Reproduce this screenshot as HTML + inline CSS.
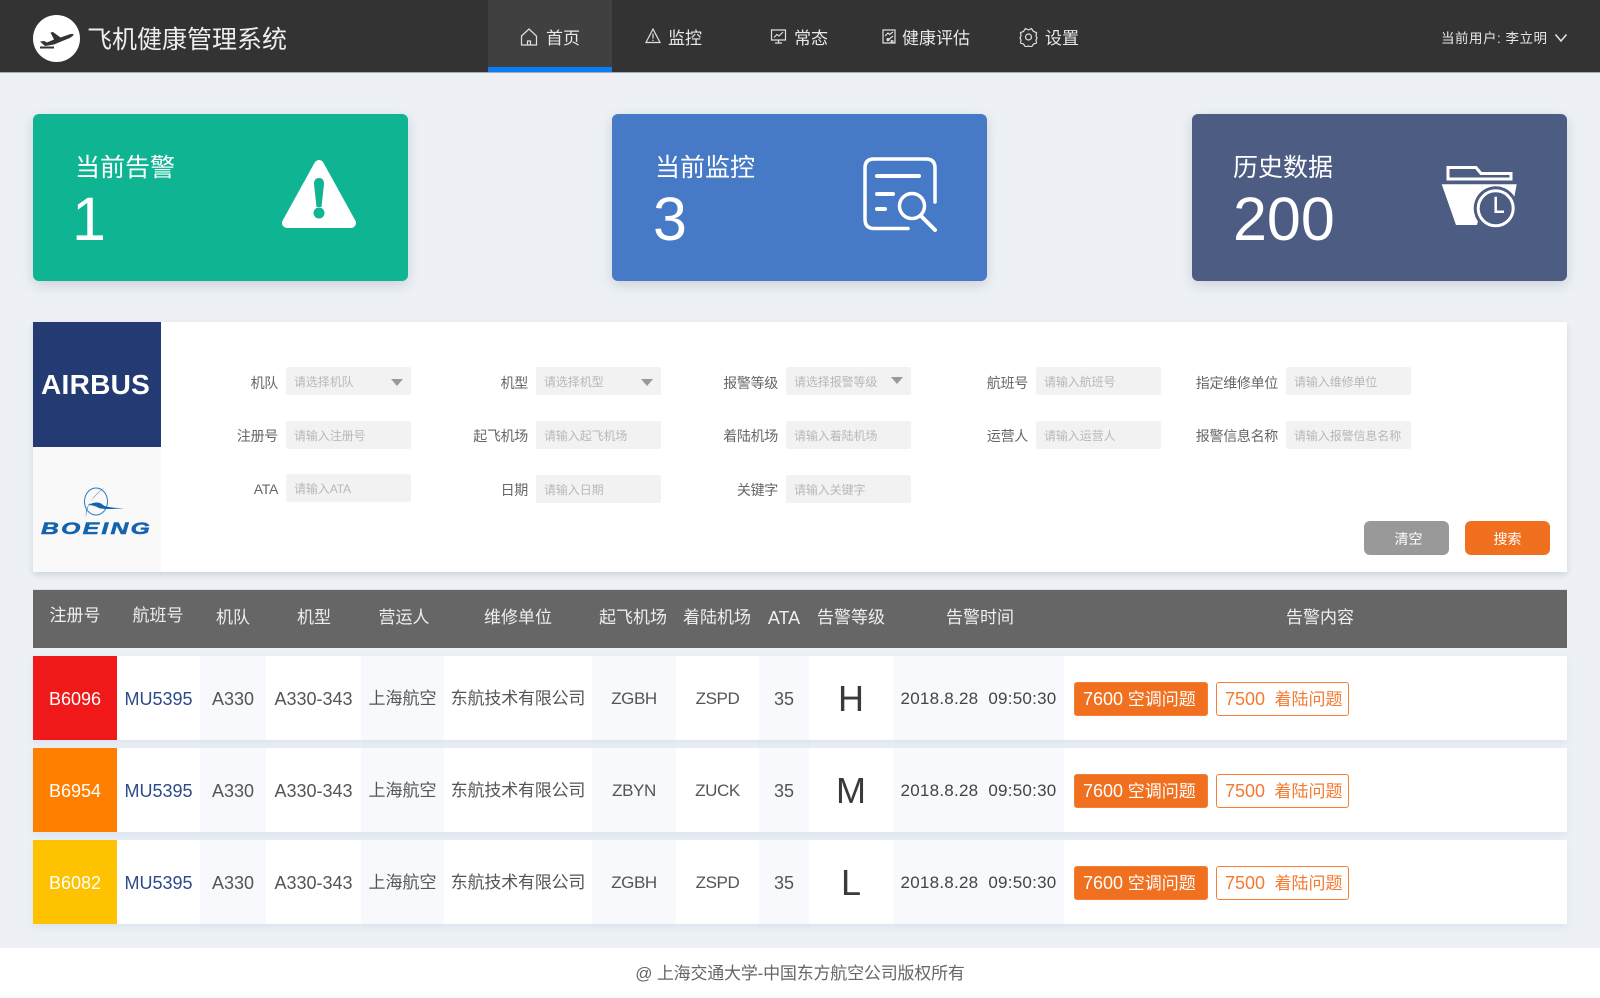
<!DOCTYPE html>
<html lang="zh-CN">
<head>
<meta charset="utf-8">
<title>飞机健康管理系统</title>
<style>
*{box-sizing:border-box;margin:0;padding:0}
html,body{width:1600px;height:998px;overflow:hidden}
body{position:relative;background:#edf1f5;font-family:"Liberation Sans","Noto Sans CJK SC",sans-serif;color:#444}
.a{position:absolute;white-space:nowrap}
#nav{left:0;top:0;width:1600px;height:73px;background:#333;border-bottom:1px solid #aaa}
#active{left:488px;top:0;width:124px;height:72px;background:#404040;border-bottom:5px solid #0a7cf5}
.nt{top:26px;height:26px;line-height:26px;font-size:17px;color:#e8e8e8}
.ni{top:27px;fill:none;stroke:#e0e0e0;stroke-width:1.2}
.card{top:114px;width:375px;height:167px;border-radius:6px;box-shadow:0 4px 12px rgba(90,100,120,.22);color:#fff}
.ct{top:36px;height:36px;line-height:36px;font-size:25px}
.cn{top:70px;height:70px;line-height:70px;font-size:61px}
#panel{left:33px;top:322px;width:1534px;height:250px;background:#fff;box-shadow:0 3px 6px rgba(90,100,120,.2)}
.lb{width:120px;text-align:right;font-size:14px;color:#666;height:20px;line-height:20px;letter-spacing:-.3px}
.in{width:125px;height:28px;background:#f2f2f2;border-radius:2px;font-size:12px;color:#b8b8b8;line-height:30px;padding-left:8px;letter-spacing:-.1px}
.tri{position:absolute;right:8px;top:12px;width:0;height:0;border-left:6.5px solid transparent;border-right:6.5px solid transparent;border-top:7px solid #999}
.btn{top:521px;width:85px;height:34px;border-radius:6px;color:#fff;font-size:14px;line-height:37px;text-align:center}
#thead{left:33px;top:589px;width:1534px;height:59px;background:#666;border-top:1px solid #ddd}
.th{top:606px;height:24px;line-height:24px;font-size:17px;color:#eee;text-align:center;transform:translateX(-50%)}
.row{left:33px;width:1534px;height:84px;display:flex;background:#fff;box-shadow:0 3px 7px rgba(95,140,190,.13)}
.row>div{height:100%;text-align:center;line-height:86px;font-size:17px;color:#555;white-space:nowrap;overflow:visible}
.row>.l{background:#f7f9fc}
.row>.n{font-size:18px}
.row>.z{letter-spacing:-.4px}
.row>.reg{color:#fff;font-size:18px}
.row>.fl{color:#2c4a8c;font-size:18px}
.row>.lv{font-size:36px;color:#3a3a3a}
.row>.tm{color:#444;letter-spacing:.25px}
.row>.cn2{letter-spacing:-.2px}
.row>.tag{top:26px;height:34px;border-radius:3px;line-height:33px;font-size:17px;text-align:left;padding-left:8px;border:1px solid #f47f35}
.tag b{font-weight:400;font-size:18px}
.row>.t1{left:1041px;width:134px;background:#f07020;color:#fff}
.row>.t2{left:1183px;width:133px;background:#fff;color:#f47a30}
#foot{left:0;top:948px;width:1600px;height:50px;background:#fff;text-align:center;line-height:52px;font-size:17px;letter-spacing:-.2px;color:#666}
</style>
</head>
<body>
<div class="a" id="nav"></div>
<div class="a" id="active"></div>

<svg class="a" style="left:33px;top:15px" width="48" height="48" viewBox="0 0 48 48">
<circle cx="23.500" cy="23.500" r="23.500" fill="#fff"/>
<path d="M7 26.500 L11 26 L14 27.500 L21 24.500 L17.500 17.500 L20 17 L27.500 22.500 L36 19.500 Q41 18 40.500 20 Q38 23 33 24.500 L21 29.500 L12 31 Z" fill="#333"/>
<path d="M7 31.500H21V33.500H7Z" fill="#333"/>
</svg>
<div class="a" style="left:87px;top:21px;height:38px;line-height:38px;font-size:25px;color:#eee">飞机健康管理系统</div>

<svg class="a ni" style="left:520px" width="18" height="20" viewBox="0 0 18 20"><path d="M1.500 9 9 2l7.500 7v9h-15zM7.500 18v-4h3v4"/></svg>
<div class="a nt" style="left:546px">首页</div>
<svg class="a ni" style="left:645px" width="16" height="18" viewBox="0 0 16 18"><path d="M8 2 15 15.500H1zM8 6.500v5M8 12.800v1.200"/></svg>
<div class="a nt" style="left:668px">监控</div>
<svg class="a ni" style="left:770px" width="17" height="18" viewBox="0 0 17 18"><path d="M1.500 3h14v10h-14zM5 16h7M8.500 13v3M4 10.500l3-3 2 1.500 4-4"/></svg>
<div class="a nt" style="left:794px">常态</div>
<svg class="a ni" style="left:881px" width="16" height="18" viewBox="0 0 16 18"><path d="M2 3h12v13H2zM4 9l3-3 1.500 1.500L12 5M6 14l6-5M7 11.500a1 1 0 1 0 .1 0M11 13.500a1 1 0 1 0 .1 0"/></svg>
<div class="a nt" style="left:902px">健康评估</div>
<svg class="a ni" style="left:1019px" width="19" height="20" viewBox="0 0 19 20"><path d="M6.500 1.500 9.500 3l3-1.500 2 3 3 1-.5 3.500 1 2-1 2 .5 3-3 1-2 3-3-1-3 1-2-3-3-1 .5-3-1-2 1-2-.5-3.500 3-1z"/><circle cx="9.500" cy="10" r="3"/></svg>
<div class="a nt" style="left:1045px">设置</div>
<div class="a" style="left:1441px;top:27px;height:24px;line-height:24px;font-size:13.500px;letter-spacing:.5px;color:#e8e8e8">当前用户: 李立明</div>
<svg class="a" style="left:1554px;top:32px" width="14" height="12" viewBox="0 0 14 12"><path d="M1.500 2.500 7 9l5.500-6.500" fill="none" stroke="#e8e8e8" stroke-width="1.500"/></svg>

<div class="a card" style="left:33px;background:#0fb493">
<div class="a ct" style="left:42px">当前告警</div>
<div class="a cn" style="left:39px">1</div>
<svg class="a" style="left:248px;top:46px" width="76" height="68" viewBox="0 0 76 68">
<path d="M38 5 70 63H6Z" fill="#fff" stroke="#fff" stroke-width="10" stroke-linejoin="round"/>
<path d="M33 24Q33 18 38 18Q43 18 43 24L40.500 47H35.500Z" fill="#0fb493"/>
<circle cx="38" cy="53" r="5.500" fill="#0fb493"/>
</svg>
</div>

<div class="a card" style="left:612px;background:#4679c6">
<div class="a ct" style="left:43px">当前监控</div>
<div class="a cn" style="left:41px">3</div>
<svg class="a" style="left:250px;top:42px" width="76" height="76" viewBox="0 0 76 76" fill="none" stroke="#fff" stroke-width="3.500" stroke-linecap="round">
<path d="M46 72.500H12Q3 72.500 3 63V12Q3 3 12 3H64Q73 3 73 12V46"/>
<path d="M15 20H57M15 38H31M15 53H23" stroke-width="4"/>
<circle cx="50" cy="50" r="12.500"/>
<path d="M59 60 73 74" stroke-width="4"/>
</svg>
</div>

<div class="a card" style="left:1192px;background:#4c5c82">
<div class="a ct" style="left:41px">历史数据</div>
<div class="a cn" style="left:41px">200</div>
<svg class="a" style="left:249px;top:50px" width="80" height="70" viewBox="0 0 80 70">
<path d="M7 3.500H35L40 9.500H70V15H7Z" fill="none" stroke="#fff" stroke-width="3"/>
<path d="M.7 20.300H75.700L71 45H40L36 61H15Z" fill="#fff"/>
<circle cx="54.700" cy="44.300" r="22" fill="#4c5c82"/>
<circle cx="54.700" cy="44.300" r="17.500" fill="none" stroke="#fff" stroke-width="3"/>
<path d="M54.700 32.700V47.700H63" fill="none" stroke="#fff" stroke-width="2.500"/>
</svg>
</div>

<div class="a" id="panel"></div>
<div class="a" style="left:33px;top:322px;width:128px;height:125px;background:#243a73"></div>
<div class="a" style="left:33px;top:447px;width:128px;height:125px;background:#f9f9f9"></div>
<div class="a" style="left:41px;top:366px;height:38px;line-height:38px;font-size:28px;font-weight:700;color:#fff;letter-spacing:.3px">AIRBUS</div>
<svg class="a" style="left:40px;top:482px" width="112" height="38" viewBox="0 0 112 38" fill="none">
<ellipse cx="56" cy="19.500" rx="11.500" ry="13.500" stroke="#2a78bb" stroke-width="1"/>
<path d="M67 4Q47 16 46 35Q44 22 64 6Z" fill="#1463ad"/>
<path d="M48 23Q58 18 63 23Q67 26 84 26Q66 28 59 26Q54 23 48 23Z" fill="#1463ad"/>
</svg>
<div class="a" style="left:41px;top:519px;width:112px;height:20px;line-height:20px;font-size:17px;font-weight:700;font-style:italic;color:#1463ad;letter-spacing:1.600px;transform:scaleX(1.450);transform-origin:0 50%;-webkit-text-stroke:.5px #1463ad">BOEING</div>

<div class="a lb" style="left:158px;top:373px">机队</div>
<div class="a in" style="left:286px;top:367px">请选择机队<span class="tri"></span></div>
<div class="a lb" style="left:408px;top:373px">机型</div>
<div class="a in" style="left:536px;top:367px">请选择机型<span class="tri"></span></div>
<div class="a lb" style="left:658px;top:373px">报警等级</div>
<div class="a in" style="left:786px;top:367px">请选择报警等级<span class="tri" style="top:10px"></span></div>
<div class="a lb" style="left:908px;top:373px">航班号</div>
<div class="a in" style="left:1036px;top:367px">请输入航班号</div>
<div class="a lb" style="left:1158px;top:373px">指定维修单位</div>
<div class="a in" style="left:1286px;top:367px">请输入维修单位</div>

<div class="a lb" style="left:158px;top:426px">注册号</div>
<div class="a in" style="left:286px;top:421px">请输入注册号</div>
<div class="a lb" style="left:408px;top:426px">起飞机场</div>
<div class="a in" style="left:536px;top:421px">请输入起飞机场</div>
<div class="a lb" style="left:658px;top:426px">着陆机场</div>
<div class="a in" style="left:786px;top:421px">请输入着陆机场</div>
<div class="a lb" style="left:908px;top:426px">运营人</div>
<div class="a in" style="left:1036px;top:421px">请输入运营人</div>
<div class="a lb" style="left:1158px;top:426px">报警信息名称</div>
<div class="a in" style="left:1286px;top:421px">请输入报警信息名称</div>

<div class="a lb" style="left:158px;top:479px">ATA</div>
<div class="a in" style="left:286px;top:474px">请输入ATA</div>
<div class="a lb" style="left:408px;top:480px">日期</div>
<div class="a in" style="left:536px;top:475px">请输入日期</div>
<div class="a lb" style="left:658px;top:480px">关键字</div>
<div class="a in" style="left:786px;top:475px">请输入关键字</div>

<div class="a btn" style="left:1364px;background:#999;padding-left:4px">清空</div>
<div class="a btn" style="left:1465px;background:#f07020">搜索</div>

<div class="a" id="thead"></div>
<div class="a th" style="left:75px;top:604px">注册号</div>
<div class="a th" style="left:158px;top:604px">航班号</div>
<div class="a th" style="left:233px">机队</div>
<div class="a th" style="left:314px">机型</div>
<div class="a th" style="left:404px">营运人</div>
<div class="a th" style="left:518px">维修单位</div>
<div class="a th" style="left:633px">起飞机场</div>
<div class="a th" style="left:717px">着陆机场</div>
<div class="a th" style="left:784px;font-size:18px">ATA</div>
<div class="a th" style="left:851px">告警等级</div>
<div class="a th" style="left:980px">告警时间</div>
<div class="a th" style="left:1320px">告警内容</div>

<div class="a row" style="top:656px">
<div class="reg" style="width:84px;background:#f01818">B6096</div>
<div class="fl" style="width:83px">MU5395</div>
<div class="n l" style="width:66px">A330</div>
<div class="n" style="width:95px">A330-343</div>
<div class="l" style="width:83px">上海航空</div>
<div class="cn2" style="width:148px">东航技术有限公司</div>
<div class="z l" style="width:84px">ZGBH</div>
<div class="z" style="width:83px">ZSPD</div>
<div class="n l" style="width:50px">35</div>
<div class="lv" style="width:84px">H</div>
<div class="tm l" style="width:171px">2018.8.28&nbsp;&nbsp;09:50:30</div>
<div style="flex:1"></div>
<div class="a tag t1"><b>7600</b> 空调问题</div>
<div class="a tag t2"><b>7500</b>&nbsp; 着陆问题</div>
</div>

<div class="a row" style="top:748px">
<div class="reg" style="width:84px;background:#ff8000">B6954</div>
<div class="fl" style="width:83px">MU5395</div>
<div class="n l" style="width:66px">A330</div>
<div class="n" style="width:95px">A330-343</div>
<div class="l" style="width:83px">上海航空</div>
<div class="cn2" style="width:148px">东航技术有限公司</div>
<div class="z l" style="width:84px">ZBYN</div>
<div class="z" style="width:83px">ZUCK</div>
<div class="n l" style="width:50px">35</div>
<div class="lv" style="width:84px">M</div>
<div class="tm l" style="width:171px">2018.8.28&nbsp;&nbsp;09:50:30</div>
<div style="flex:1"></div>
<div class="a tag t1"><b>7600</b> 空调问题</div>
<div class="a tag t2"><b>7500</b>&nbsp; 着陆问题</div>
</div>

<div class="a row" style="top:840px">
<div class="reg" style="width:84px;background:#ffc200">B6082</div>
<div class="fl" style="width:83px">MU5395</div>
<div class="n l" style="width:66px">A330</div>
<div class="n" style="width:95px">A330-343</div>
<div class="l" style="width:83px">上海航空</div>
<div class="cn2" style="width:148px">东航技术有限公司</div>
<div class="z l" style="width:84px">ZGBH</div>
<div class="z" style="width:83px">ZSPD</div>
<div class="n l" style="width:50px">35</div>
<div class="lv" style="width:84px">L</div>
<div class="tm l" style="width:171px">2018.8.28&nbsp;&nbsp;09:50:30</div>
<div style="flex:1"></div>
<div class="a tag t1"><b>7600</b> 空调问题</div>
<div class="a tag t2"><b>7500</b>&nbsp; 着陆问题</div>
</div>

<div class="a" id="foot">@ 上海交通大学-中国东方航空公司版权所有</div>
</body>
</html>
